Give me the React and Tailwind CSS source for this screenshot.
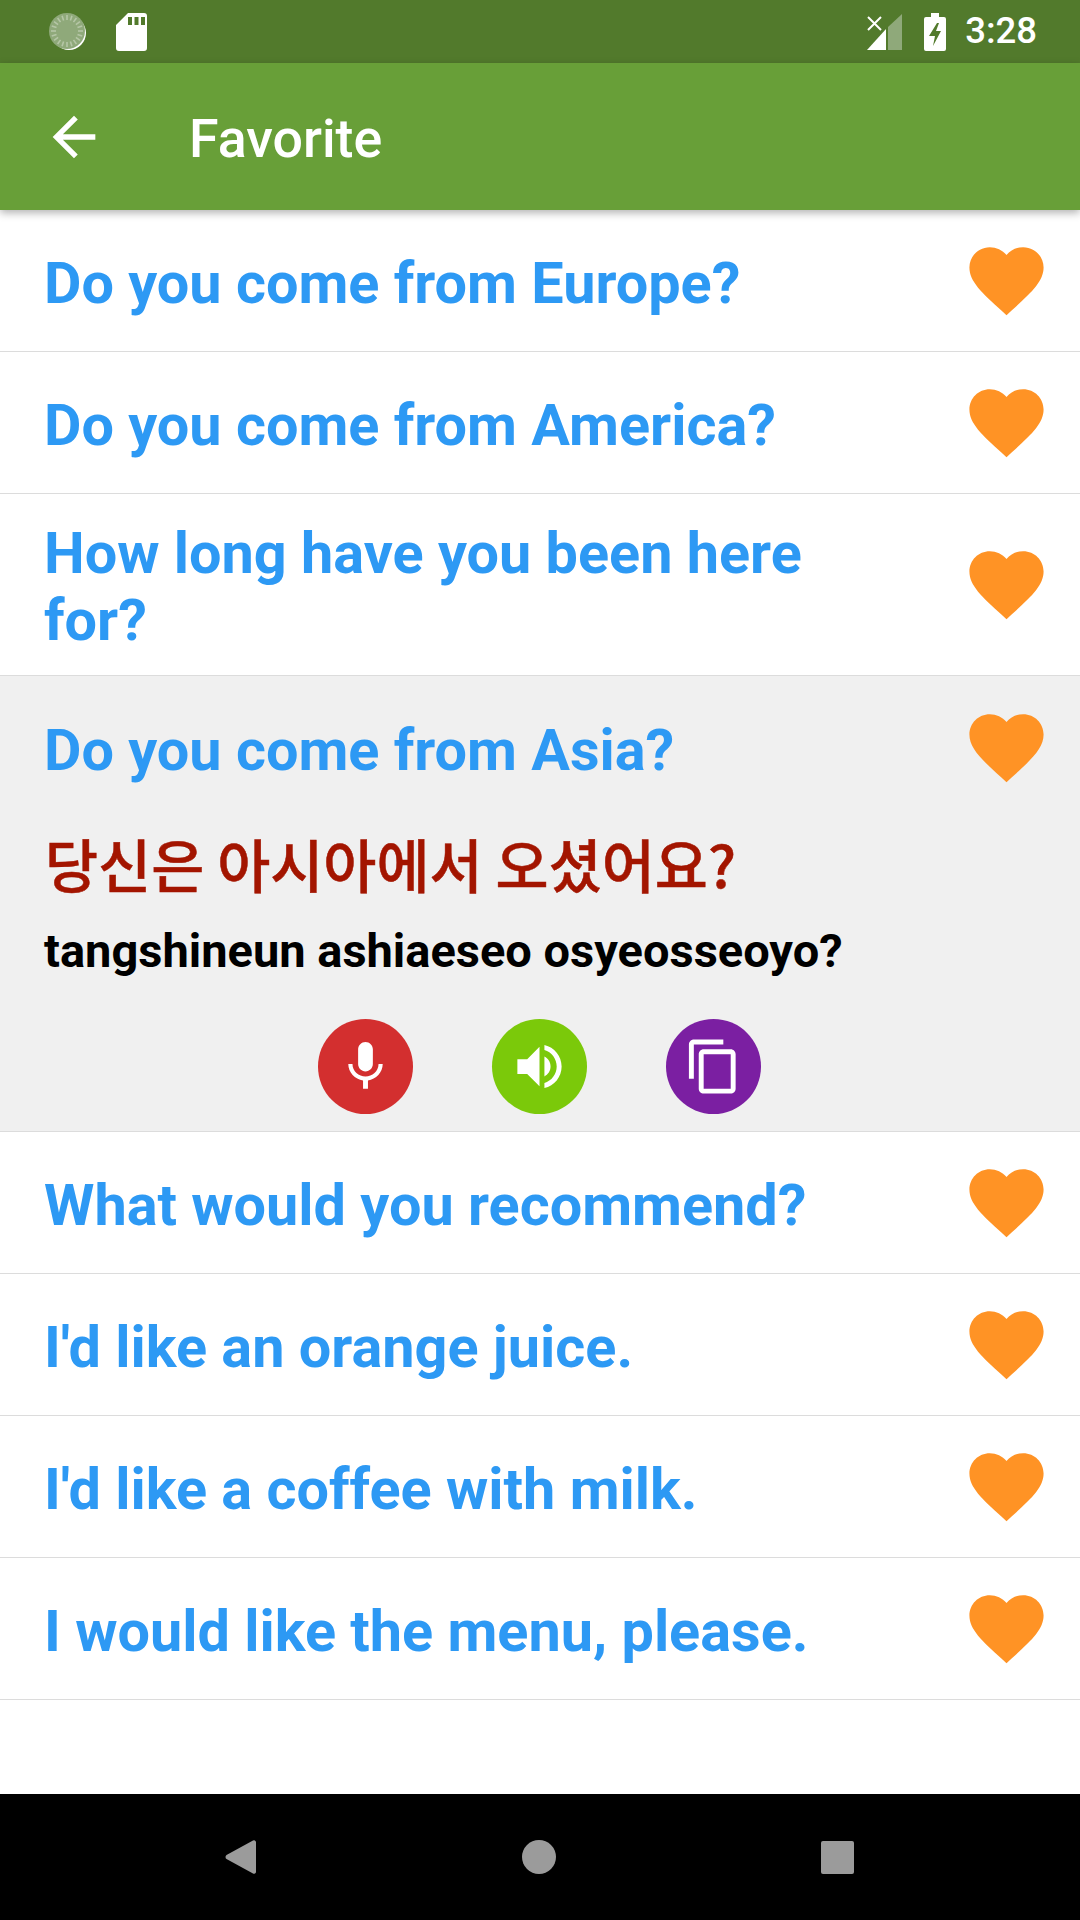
const phrases = [
  "Do you come from Europe?",
  "Do you come from America?",
  "How long have you been here for?",
]

const morePhrases = [
  "What would you recommend?",
  "I'd like an orange juice.",
  "I'd like a coffee with milk.",
  "I would like the menu, please.",
]

function Heart() {
  return (
    <svg className="w-[89px] h-[89px] shrink-0 fill-[#ff9325]" viewBox="0 0 24 24">
      <path d="M12 21.35l-1.45-1.32C5.4 15.36 2 12.28 2 8.5 2 5.42 4.42 3 7.5 3c1.74 0 3.41.81 4.5 2.09C13.09 3.81 14.76 3 16.5 3 19.58 3 22 5.42 22 8.5c0 3.78-3.4 6.86-8.55 11.54L12 21.35z" />
    </svg>
  )
}

function PhraseRow({ text }) {
  return (
    <div className="flex items-center justify-between min-h-[142px] pl-[44px] pr-[29px] py-[23.5px] border-b border-[#dcdcdc]">
      <p className="w-[800px] pt-[2.5px] -mb-[2.5px] text-[57.6px] leading-[67px] font-bold text-[#2d99f4]">{text}</p>
      <Heart />
    </div>
  )
}

function RoundButton({ color, path }) {
  return (
    <button className={`flex items-center justify-center w-[95px] h-[95px] rounded-full ${color}`}>
      <svg className="w-[59px] h-[59px] fill-white" viewBox="0 0 24 24">
        <path d={path} />
      </svg>
    </button>
  )
}

function StatusBar() {
  const ticks = Array.from({ length: 20 }, (_, i) => i * 18)
  return (
    <div className="flex items-center justify-between h-[63px] bg-[#527a2c] pl-[49px] pr-[43px]">
      <div className="flex items-center gap-[29px]">
        {/* sync spinner */}
        <svg className="w-[38px] h-[38px]" viewBox="0 0 38 38">
          <circle cx="20" cy="20" r="17" fill="#ffffff" />
          <circle cx="18" cy="18" r="18" fill="#8fa97a" />
          {ticks.map((deg) => (
            <rect key={deg} x="17.2" y="2" width="1.6" height="5" fill="#b5c6a6" transform={`rotate(${deg} 18 18)`} />
          ))}
        </svg>
        {/* sd card */}
        <svg className="w-[31px] h-[38px] fill-white" viewBox="0 0 31 38">
          <path fillRule="evenodd" d="M12 0h16a3 3 0 0 1 3 3v32a3 3 0 0 1-3 3H3a3 3 0 0 1-3-3V12zM12 4v8h4V4zm6.500 0v8h4V4zm6.500 0v8h4V4z" />
        </svg>
      </div>
      <div className="flex items-center">
        {/* signal */}
        <svg className="w-[35px] h-[36px] mr-[22px]" viewBox="0 0 35 36">
          <path d="M35 0v36H21V13z" fill="#8fa97a" />
          <path d="M19 15v21H0z" fill="#ffffff" />
          <path d="M1 3l13 13M14 3L1 16" stroke="#ffffff" strokeWidth="2" />
        </svg>
        {/* battery */}
        <svg className="w-[22px] h-[38px] mr-[19px]" viewBox="0 0 22 38">
          <path fillRule="evenodd" fill="#ffffff" d="M7 0h8v4h5a2 2 0 0 1 2 2v30a2 2 0 0 1-2 2H2a2 2 0 0 1-2-2V6a2 2 0 0 1 2-2h5zM13 10L5 23h6l-2 10 8-15h-5l3-8z" />
        </svg>
        <span className="text-[36.5px] leading-none font-medium text-white">3:28</span>
      </div>
    </div>
  )
}

export default function App() {
  return (
    <div className="flex flex-col w-[1080px] h-[1920px] bg-white font-['Roboto','Noto_Sans_CJK_KR',sans-serif]">
      <StatusBar />

      {/* App bar */}
      <div className="relative z-10 flex items-center h-[147px] bg-[#689f38] pl-[42px] shadow-[0_3px_8px_rgba(0,0,0,0.3)]">
        <svg className="w-[64px] h-[64px] fill-white" viewBox="0 0 24 24">
          <path d="M20 11H7.830l5.590-5.590L12 4l-8 8 8 8 1.410-1.410L7.830 13H20v-2z" />
        </svg>
        <h1 className="ml-[83px] pt-[3px] text-[53.7px] leading-[63px] font-medium text-white">Favorite</h1>
      </div>

      {phrases.map((text) => (
        <PhraseRow key={text} text={text} />
      ))}

      {/* Expanded phrase */}
      <div className="flex flex-col h-[456px] bg-[#f0f0f0] border-b border-[#dcdcdc]">
        <div className="flex items-center justify-between h-[142px] pl-[44px] pr-[29px]">
          <p className="pt-[7px] text-[57.6px] leading-[67px] font-bold text-[#2d99f4]">Do you come from Asia?</p>
          <Heart />
        </div>
        <p className="pl-[45px] mt-[9px] text-[57.7px] leading-[72px] font-medium font-['Noto_Sans_CJK_KR',sans-serif] text-[#a31500] [-webkit-text-stroke:0.5px_#a31500]">당신은 아시아에서 오셨어요?</p>
        <p className="pl-[44px] mt-[25px] text-[47px] leading-[54px] font-bold text-black">tangshineun ashiaeseo osyeosseoyo?</p>
        <div className="flex justify-center gap-[79px] mt-[41px] pr-[1px]">
          <RoundButton
            color="bg-[#d32f2f]"
            path="M12 14c1.66 0 2.99-1.34 2.99-3L15 5c0-1.66-1.34-3-3-3S9 3.340 9 5v6c0 1.660 1.340 3 3 3zm5.300-3c0 3-2.540 5.100-5.300 5.100S6.700 14 6.700 11H5c0 3.410 2.720 6.230 6 6.720V21h2v-3.280c3.280-.48 6-3.300 6-6.720h-1.700z"
          />
          <RoundButton
            color="bg-[#7bc90a]"
            path="M3 9v6h4l5 5V4L7 9H3zm13.500 3c0-1.770-1.020-3.290-2.500-4.030v8.050c1.480-.73 2.500-2.250 2.500-4.020zM14 3.230v2.060c2.890.86 5 3.540 5 6.710s-2.110 5.850-5 6.710v2.060c4.010-.91 7-4.490 7-8.770s-2.990-7.860-7-8.770z"
          />
          <RoundButton
            color="bg-[#7b1fa2]"
            path="M16 1H4c-1.100 0-2 .9-2 2v14h2V3h12V1zm3 4H8c-1.100 0-2 .9-2 2v14c0 1.100.9 2 2 2h11c1.100 0 2-.9 2-2V7c0-1.100-.9-2-2-2zm0 16H8V7h11v14z"
          />
        </div>
      </div>

      {morePhrases.map((text) => (
        <PhraseRow key={text} text={text} />
      ))}

      <div className="flex-1" />

      {/* Navigation bar */}
      <div className="flex items-center h-[126px] bg-black pl-[225px] pr-[226px] justify-between">
        <svg className="w-[32px] h-[36px] fill-[#9b9b9b]" viewBox="0 0 32 36">
          <path d="M28 1.500a2 2 0 0 1 3 1.500v30a2 2 0 0 1-3 1.500L1.500 20a2.500 2.500 0 0 1 0-4z" />
        </svg>
        <div className="w-[34px] h-[34px] rounded-full bg-[#9b9b9b]" />
        <div className="w-[33px] h-[33px] rounded-[2px] bg-[#9b9b9b]" />
      </div>
    </div>
  )
}
